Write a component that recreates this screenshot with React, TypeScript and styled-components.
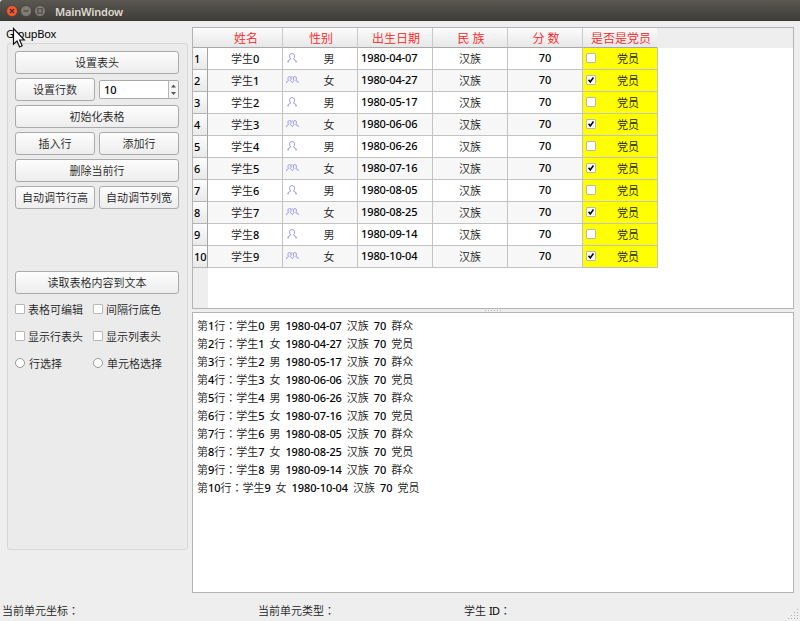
import React from "react";
import styled, { createGlobalStyle, css } from "styled-components";

const Global = createGlobalStyle`
  * { box-sizing: border-box; }
  body {
    margin: 0;
    background: #eee;
    color: #000;
    font: 11px/18px "Noto Sans", "Noto Sans CJK SC", sans-serif;
  }
`;

const Window = styled.div`
  position: relative;
  width: 800px;
  height: 621px;
  display: flex;
  flex-direction: column;
  overflow: hidden;
  white-space: nowrap;
`;

const TitleBar = styled.header`
  height: 21px;
  flex: none;
  display: flex;
  align-items: center;
  gap: 2px;
  padding: 1px 0 0 6px;
  background: linear-gradient(#5a5850, #403e3a 94%, #302f2b);
  border-radius: 3px 0 0 0;
`;

const Title = styled.h1`
  margin: 0 0 0 7px;
  color: #dfdbd2;
  font: 600 11px/18px "Noto Sans", sans-serif;
  letter-spacing: -0.2px;
  padding-top: 1px;
`;

const Content = styled.main`
  height: 579px;
  flex: none;
  display: flex;
`;

const Sidebar = styled.section`
  width: 192px;
  padding: 4px 4px 0 7px;
`;

const GroupTitle = styled.div`
  height: 18px;
  margin-left: -1px;
  letter-spacing: -0.25px;
`;

const GroupFrame = styled.div`
  height: 507px;
  width: 181px;
  padding: 7px 7px 0;
  border: 1px solid #d6d6d6;
  border-radius: 3px;
  background: #ebebeb;
`;

const ButtonStack = styled.div`
  display: grid;
  grid-template-columns: 80px 80px;
  gap: 4px;
`;

const raised = css`
  border: 1px solid #aaa;
  border-radius: 3px;
  background: linear-gradient(#fdfdfd, #ededed);
`;

const Button = styled.button<{ $wide?: boolean }>`
  ${raised}
  height: 23px;
  width: 100%;
  padding: 1px 0 0;
  font: 350 11px/20px "Noto Sans", "Noto Sans CJK SC", sans-serif;
  color: #222;
  grid-column: ${(p) => (p.$wide ? "span 2" : "auto")};
`;

const SpinBox = styled.div`
  height: 19px;
  margin-top: 2px;
  display: flex;
  border: 1px solid #aaa;
  border-radius: 2px;
  background: #fff;
  overflow: hidden;
`;

const SpinValue = styled.span`
  flex: 1;
  padding-left: 4px;
  line-height: 18px;
  font-weight: 500;
`;

const SpinArrows = styled.span`
  width: 10px;
  border-left: 1px solid #b5b5b5;
  background: #f5f5f5;
  svg { display: block; }
`;

const ReadArea = styled.div`
  margin-top: 62px;
  width: 164px;
`;

const Options = styled.div`
  display: grid;
  grid-template-columns: 78px 80px;
  grid-auto-rows: 27px;
  margin-top: 2px;
`;

const Option = styled.label`
  display: flex;
  align-items: center;
  gap: 3px;
  font-weight: 350;
  color: #222;
`;

const CheckMark = styled.span<{ $round?: boolean }>`
  width: 10px;
  height: 10px;
  flex: none;
  display: block;
  background: #fff;
  border: 1px solid ${(p) => (p.$round ? "#999" : "#b8b8b8")};
  border-radius: ${(p) => (p.$round ? "50%" : "1px")};
  margin-right: ${(p) => (p.$round ? "1px" : "0")};
  margin-bottom: 2px;
  svg { display: block; }
`;

const Panels = styled.section`
  width: 602px;
  padding-top: 6px;
`;

const TableFrame = styled.div`
  height: 282px;
  border: 1px solid #b4b4b4;
  background: #fff;
  display: flex;
  flex-direction: column;
`;

const TableRow = styled.div<{ $header?: boolean }>`
  display: grid;
  grid-template-columns: 15px repeat(6, 75px) 1fr;
  height: ${(p) => (p.$header ? "20px" : "22px")};
  flex: none;
`;

const ColumnHead = styled.div<{ $first?: boolean }>`
  grid-column: ${(p) => (p.$first ? "span 2" : "auto")};
  height: 20px;
  padding: 2px 0 0 ${(p) => (p.$first ? "17px" : "2px")};
  border-right: 1px solid #c9c9c9;
  border-bottom: 1px solid #a8a8a8;
  background: linear-gradient(#fcfcfc, #e7e7e7);
  color: #ff2020;
  font-size: 12px;
  font-weight: 350;
  line-height: 17px;
  text-align: center;
  &:nth-last-child(2) { border-right-color: #eee; }
`;

const HeadFill = styled.div`
  height: 20px;
  background: #eee;
`;

const RowHead = styled.div`
  padding: 2px 0 0 1px;
  font-weight: 500;
  border-right: 1px solid #a4a4a4;
  border-bottom: 1px solid #b4b4b4;
  background: linear-gradient(#fcfcfc, #e9e9e9);
`;

const Cell = styled.div<{ $alt: boolean; $left?: boolean }>`
  padding: ${(p) => (p.$left ? "1px 0 0 3px" : "2px 0 0")};
  text-align: ${(p) => (p.$left ? "left" : "center")};
  background: ${(p) => (p.$alt ? "#f7f7f7" : "#fff")};
  border-right: 1px solid #c3c3c3;
  border-bottom: 1px solid #c3c3c3;
  font-weight: 350;
  color: #222;
`;

const MarkedCell = styled(Cell)<{ $party?: boolean }>`
  display: flex;
  padding: 2px 0 0 3px;
  background: ${(p) => (p.$party ? "#ff0" : p.$alt ? "#f7f7f7" : "#fff")};
  > :first-child { flex: none; margin-top: ${(p) => (p.$party ? "3px" : "2px")}; }
  > :last-child { flex: 1; padding-left: ${(p) => (p.$party ? "3px" : "2px")}; }
`;

const ScoreCell = styled(Cell)`
  padding-top: 1px;
`;

const HeadColumnFill = styled.div`
  width: 15px;
  flex: 1;
  background: #eee;
`;

const Latin = styled.span`
  color: #000;
  font-weight: 500;
  letter-spacing: -0.1px;
`;

const Colon = styled.span`
  font-family: "Noto Sans CJK TC", sans-serif;
  font-weight: 400;
  line-height: 1;
`;

const SplitHandle = styled.div`
  height: 3px;
  display: flex;
  justify-content: center;
  align-items: center;
`;

const TextFrame = styled.div`
  height: 281px;
  padding: 4px;
  border: 1px solid #b4b4b4;
  background: #fff;
  font-weight: 350;
  color: #222;
`;

const Line = styled.div`
  height: 18px;
  display: flex;
  gap: 5px;
`;

const StatusBar = styled.footer`
  flex: 1;
  display: grid;
  grid-template-columns: 256px 206px 1fr auto;
  padding: 2px 1px 0 2px;
  font-weight: 350;
  color: #222;
`;

const Initials = styled(Latin)`
  letter-spacing: -0.5px;
  font-weight: 400;
`;

const Grip = styled.svg`
  align-self: end;
  margin-bottom: 1px;
`;

const Pointer = styled.svg`
  position: absolute;
  left: 12px;
  top: 27px;
`;

const dates = [
  "1980-04-07", "1980-04-27", "1980-05-17", "1980-06-06", "1980-06-26",
  "1980-07-16", "1980-08-05", "1980-08-25", "1980-09-14", "1980-10-04",
];

const students = dates.map((date, i) => ({
  name: i,
  male: i % 2 === 0,
  date,
}));

function WindowButton({ kind }: { kind: "close" | "min" | "max" }) {
  const close = kind === "close";
  return (
    <svg width="12" height="12" viewBox="0 0 12 12" fill="none">
      <circle cx="6" cy="6" r="5.5" fill={close ? "#ee5b33" : "#807d75"} stroke="#3a3834" strokeWidth=".6" />
      {close && <path d="M4 4l4 4M8 4l-4 4" stroke="#52281a" strokeWidth="1.1" />}
      {kind === "min" && <path d="M3.5 6h5" stroke="#45433e" strokeWidth="1.2" />}
      {kind === "max" && <rect x="3.8" y="3.8" width="4.4" height="4.4" stroke="#45433e" />}
    </svg>
  );
}

function Check({ on }: { on?: boolean }) {
  return (
    <CheckMark>
      {on && (
        <svg width="8" height="8" viewBox="0 0 8 8" fill="none">
          <path d="M1.6 3.7L3.3 6L6.4 1.5" stroke="#000" strokeWidth="1.5" />
        </svg>
      )}
    </CheckMark>
  );
}

function PersonIcon({ pair }: { pair: boolean }) {
  return (
    <svg width="13" height="12" viewBox="0 0 13 12" fill="none" stroke="#8f8fea" strokeWidth="0.9">
      {pair ? (
        <path d="M.5 8.8V7.8L2.6 6.6Q1.8 5.4 2 3.8Q2.3 2.5 3.5 2.5T5 3.8Q5.2 5.4 4.4 6.6L6.3 8.6L8 6.6Q7.2 5.4 7.4 3.8Q7.8 2.5 8.9 2.5T10.4 3.8Q10.6 5.4 9.8 6.6L12.2 7.8V8.8M5.2 3.6L6.2 2.6L7.2 3.6" />
      ) : (
        <path d="M1.7 10H3M1.7 10L2.3 8.5L4.7 7.2Q3.6 5.8 3.6 3.9Q3.9 1.5 6.1 1.5T8.6 3.9Q8.6 5.8 7.5 7.2L9.9 8.5L10.5 10H9.2" />
      )}
    </svg>
  );
}

function Dots({ n }: { n: number }) {
  return (
    <svg width="18" height="3" viewBox="0 0 18 3" fill="#b0b0b0">
      {Array.from({ length: n }, (_, i) => (
        <rect key={i} x={i * 3 + 1} y="1" width="1" height="1" />
      ))}
    </svg>
  );
}

export default function App() {
  return (
    <>
      <Global />
      <Window>
        <TitleBar>
          <WindowButton kind="close" />
          <WindowButton kind="min" />
          <WindowButton kind="max" />
          <Title>MainWindow</Title>
        </TitleBar>
        <Content>
          <Sidebar>
            <GroupTitle>GroupBox</GroupTitle>
            <GroupFrame>
              <ButtonStack>
                <Button $wide>设置表头</Button>
                <Button>设置行数</Button>
                <SpinBox>
                  <SpinValue>10</SpinValue>
                  <SpinArrows>
                    <svg width="9" height="17" viewBox="0 0 9 17" fill="#555">
                      <path d="M2 6.5L4.5 3.5L7 6.5ZM2 11L4.5 14L7 11Z" />
                    </svg>
                  </SpinArrows>
                </SpinBox>
                <Button $wide>初始化表格</Button>
                <Button>插入行</Button>
                <Button>添加行</Button>
                <Button $wide>删除当前行</Button>
                <Button>自动调节行高</Button>
                <Button>自动调节列宽</Button>
              </ButtonStack>
              <ReadArea>
                <Button>读取表格内容到文本</Button>
              </ReadArea>
              <Options>
                <Option><Check />表格可编辑</Option>
                <Option><Check />间隔行底色</Option>
                <Option><Check />显示行表头</Option>
                <Option><Check />显示列表头</Option>
                <Option><CheckMark $round />行选择</Option>
                <Option><CheckMark $round />单元格选择</Option>
              </Options>
            </GroupFrame>
          </Sidebar>
          <Panels>
            <TableFrame>
              <TableRow $header>
                <ColumnHead $first>姓名</ColumnHead>
                <ColumnHead>性别</ColumnHead>
                <ColumnHead>出生日期</ColumnHead>
                <ColumnHead>民 族</ColumnHead>
                <ColumnHead>分 数</ColumnHead>
                <ColumnHead>是否是党员</ColumnHead>
                <HeadFill />
              </TableRow>
              {students.map((s, i) => (
                <TableRow key={s.date}>
                  <RowHead>{i + 1}</RowHead>
                  <Cell $alt={!s.male}>学生<Latin>{s.name}</Latin></Cell>
                  <MarkedCell $alt={!s.male}>
                    <PersonIcon pair={!s.male} />
                    <span>{s.male ? "男" : "女"}</span>
                  </MarkedCell>
                  <Cell $alt={!s.male} $left><Latin>{s.date}</Latin></Cell>
                  <Cell $alt={!s.male}>汉族</Cell>
                  <ScoreCell $alt={!s.male}><Latin>70</Latin></ScoreCell>
                  <MarkedCell $alt={!s.male} $party>
                    <Check on={!s.male} />
                    <span>党员</span>
                  </MarkedCell>
                </TableRow>
              ))}
              <HeadColumnFill />
            </TableFrame>
            <SplitHandle><Dots n={6} /></SplitHandle>
            <TextFrame>
              {students.map((s, i) => (
                <Line key={s.date}>
                  <span>第<Latin>{i + 1}</Latin>行<Colon>：</Colon>学生<Latin>{s.name}</Latin></span>
                  <span>{s.male ? "男" : "女"}</span>
                  <Latin>{s.date}</Latin>
                  <span>汉族</span>
                  <Latin>70</Latin>
                  <span>{s.male ? "群众" : "党员"}</span>
                </Line>
              ))}
            </TextFrame>
          </Panels>
        </Content>
        <StatusBar>
          <span>当前单元坐标<Colon>：</Colon></span>
          <span>当前单元类型<Colon>：</Colon></span>
          <span>学生 <Initials>ID</Initials><Colon>：</Colon></span>
          <Grip width="12" height="12" viewBox="0 0 12 12" fill="#b0b0b0">
            {[0, 1, 2, 3].map((r) =>
              Array.from({ length: r + 1 }, (_, c) => (
                <rect key={`${r}-${c}`} x={10 - c * 3} y={r * 3 + 1} width="1" height="1" />
              ))
            )}
          </Grip>
        </StatusBar>
        <Pointer width="14" height="22" viewBox="0 0 14 22">
          <path d="M1.5 1.5V17.2L5 14L7.6 20L10.2 18.8L7.6 13H12.3Z" fill="#fff" stroke="#111" strokeWidth="1.2" />
        </Pointer>
      </Window>
    </>
  );
}
